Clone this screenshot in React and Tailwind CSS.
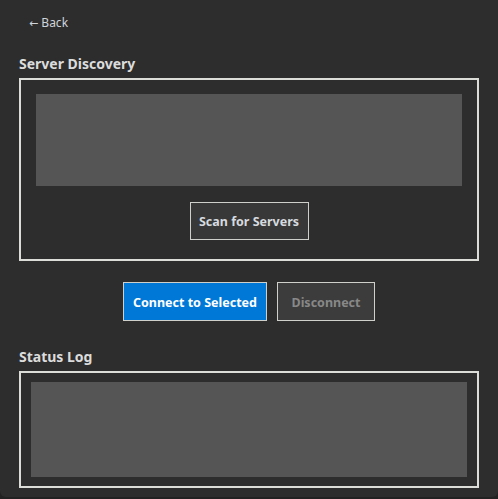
import React from "react";

function GroupBox({ className = "", children }) {
  return (
    <div className={`border-2 border-[#dcdcd8] ${className}`}>{children}</div>
  );
}

export default function App() {
  return (
    <div
      className="w-[498px] h-[499px] bg-[#222222]"
      style={{ fontFamily: '"Noto Sans", "Open Sans", sans-serif' }}
    >
      <div className="h-[497px] bg-[#2d2d2d] rounded-b-[6px] px-[19px] pt-[14px] flex flex-col">
        {/* Back link */}
        <div className="ml-[10px] h-[18px] text-[12px] leading-[18px] text-[#cfd4da]">
          <span className="font-['DejaVu_Sans'] text-[11px] leading-[18px]">←</span> Back
        </div>

        {/* Server discovery */}
        <div className="mt-[23px] mb-[5px] text-[14px] leading-[18px] font-bold text-[#dcdcdc]">
          Server Discovery
        </div>
        <GroupBox className="h-[183px] px-[15px] pt-[14px] flex flex-col items-center">
          <div className="w-full h-[92px] bg-[#555555]" />
          <button className="mt-[16px] w-[119px] h-[38px] pt-[2px] border border-[#cfcfcb] bg-[#383838] text-[12.5px] font-bold text-[#d6dadf]">
            Scan for Servers
          </button>
        </GroupBox>

        {/* Connect buttons */}
        <div className="mt-[21px] flex justify-center gap-[10px]">
          <button className="w-[144px] h-[39px] pt-[3px] border border-[#cfcfcb] bg-[#0078d7] text-[12.5px] font-bold text-white">
            Connect to Selected
          </button>
          <button className="w-[98px] h-[39px] pt-[3px] border border-[#cfcfcb] bg-[#3c3c3c] text-[12.5px] font-bold text-[#888888]">
            Disconnect
          </button>
        </div>

        {/* Status log */}
        <div className="mt-[27px] mb-[5px] text-[14px] leading-[18px] font-bold text-[#dcdcdc]">
          Status Log
        </div>
        <GroupBox className="h-[117px] px-[10px] py-[9px]">
          <div className="w-full h-full bg-[#555555]" />
        </GroupBox>
      </div>
    </div>
  );
}
